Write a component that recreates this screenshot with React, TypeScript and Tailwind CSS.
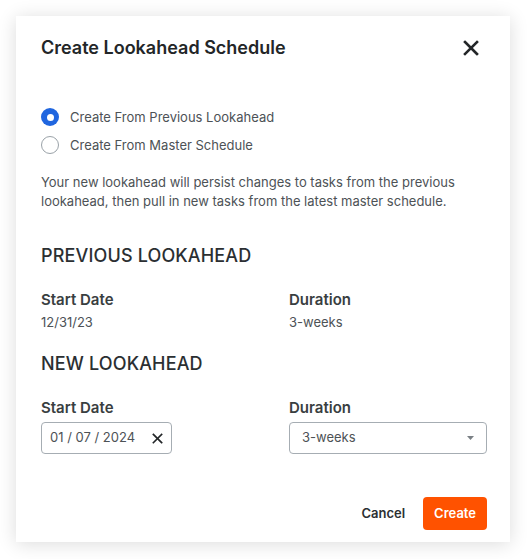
import { useState } from 'react';

function CloseIcon({ size, stroke }: { size: number; stroke: number }) {
  return (
    <svg width={size} height={size} viewBox="0 0 16 16" fill="none">
      <path
        d="M2 2L14 14M14 2L2 14"
        stroke="currentColor"
        strokeWidth={stroke}
        strokeLinecap="square"
      />
    </svg>
  );
}

function Radio({ checked, label, onClick }: { checked: boolean; label: string; onClick: () => void }) {
  return (
    <button type="button" onClick={onClick} className="flex h-[28px] items-center text-left">
      {checked ? (
        <span className="flex h-[18px] w-[18px] items-center justify-center rounded-full bg-[#2066df]">
          <span className="h-[7px] w-[7px] rounded-full bg-white" />
        </span>
      ) : (
        <span className="h-[18px] w-[18px] rounded-full border border-[#9aa2a8] bg-white" />
      )}
      <span className="ml-[11px] text-[13px] leading-[20px] text-[#4d5256]">{label}</span>
    </button>
  );
}

export default function App() {
  const [source, setSource] = useState<'previous' | 'master'>('previous');

  return (
    <div className="min-h-[559px] bg-white p-[16px] font-['Inter',sans-serif]">
      <div className="flex w-[494px] flex-col bg-white pl-[25px] pr-[23px] pb-[12px] shadow-[0_2px_18px_rgba(0,0,0,0.14)]">
        <div className="flex h-[64px] items-center justify-between">
          <h2 className="text-[18px] font-semibold leading-[24px] text-[#232628]">Create Lookahead Schedule</h2>
          <button type="button" className="mr-[8px] text-[#232628]">
            <CloseIcon size={16} stroke={2.6} />
          </button>
        </div>

        <div className="mt-[23px] flex flex-col">
          <Radio
            checked={source === 'previous'}
            label="Create From Previous Lookahead"
            onClick={() => setSource('previous')}
          />
          <Radio
            checked={source === 'master'}
            label="Create From Master Schedule"
            onClick={() => setSource('master')}
          />
        </div>

        <p className="mt-[14px] text-[13px] leading-[19px] text-[#4d5256]">
          Your new lookahead will persist changes to tasks from the previous lookahead, then pull in new tasks from the latest master schedule.
        </p>

        <h3 className="mt-[33px] text-[18px] font-medium leading-[24px] tracking-[0.15px] text-[#2b2f32]">PREVIOUS LOOKAHEAD</h3>
        <div className="mt-[22px] grid grid-cols-[248px_1fr]">
          <div>
            <div className="text-[15px] font-semibold leading-[20px] text-[#393e41]">Start Date</div>
            <div className="mt-[2px] text-[13px] leading-[20px] text-[#4d5256]">12/31/23</div>
          </div>
          <div>
            <div className="text-[15px] font-semibold leading-[20px] text-[#393e41]">Duration</div>
            <div className="mt-[2px] text-[13px] leading-[20px] text-[#4d5256]">3-weeks</div>
          </div>
        </div>

        <h3 className="mt-[20px] text-[18px] font-medium leading-[24px] tracking-[0.15px] text-[#2b2f32]">NEW LOOKAHEAD</h3>
        <div className="mt-[22px] grid grid-cols-[248px_1fr]">
          <div>
            <div className="text-[15px] font-semibold leading-[20px] text-[#393e41]">Start Date</div>
            <div className="mt-[4px] flex h-[32px] w-[131px] items-center justify-between rounded-[4px] border border-[#a6adb3] pl-[8px] pr-[8px]">
              <span className="text-[13px] text-[#4d5256]">01 / 07 / 2024</span>
              <span className="text-[#232628]">
                <CloseIcon size={11} stroke={2.4} />
              </span>
            </div>
          </div>
          <div>
            <div className="text-[15px] font-semibold leading-[20px] text-[#393e41]">Duration</div>
            <div className="mt-[4px] flex h-[32px] w-[198px] items-center justify-between rounded-[4px] border border-[#a6adb3] pl-[12px] pr-[12px]">
              <span className="text-[13px] text-[#4d5256]">3-weeks</span>
              <svg width="7" height="4" viewBox="0 0 7 4">
                <path d="M0 0H7L3.5 4Z" fill="#7a8085" />
              </svg>
            </div>
          </div>
        </div>

        <div className="mt-[43px] flex items-center justify-end gap-[18px]">
          <button type="button" className="text-[13px] font-semibold text-[#2b2f32]">Cancel</button>
          <button
            type="button"
            className="h-[33px] rounded-[4px] bg-[#ff5200] px-[11px] text-[13px] font-semibold text-white"
          >
            Create
          </button>
        </div>
      </div>
    </div>
  );
}
